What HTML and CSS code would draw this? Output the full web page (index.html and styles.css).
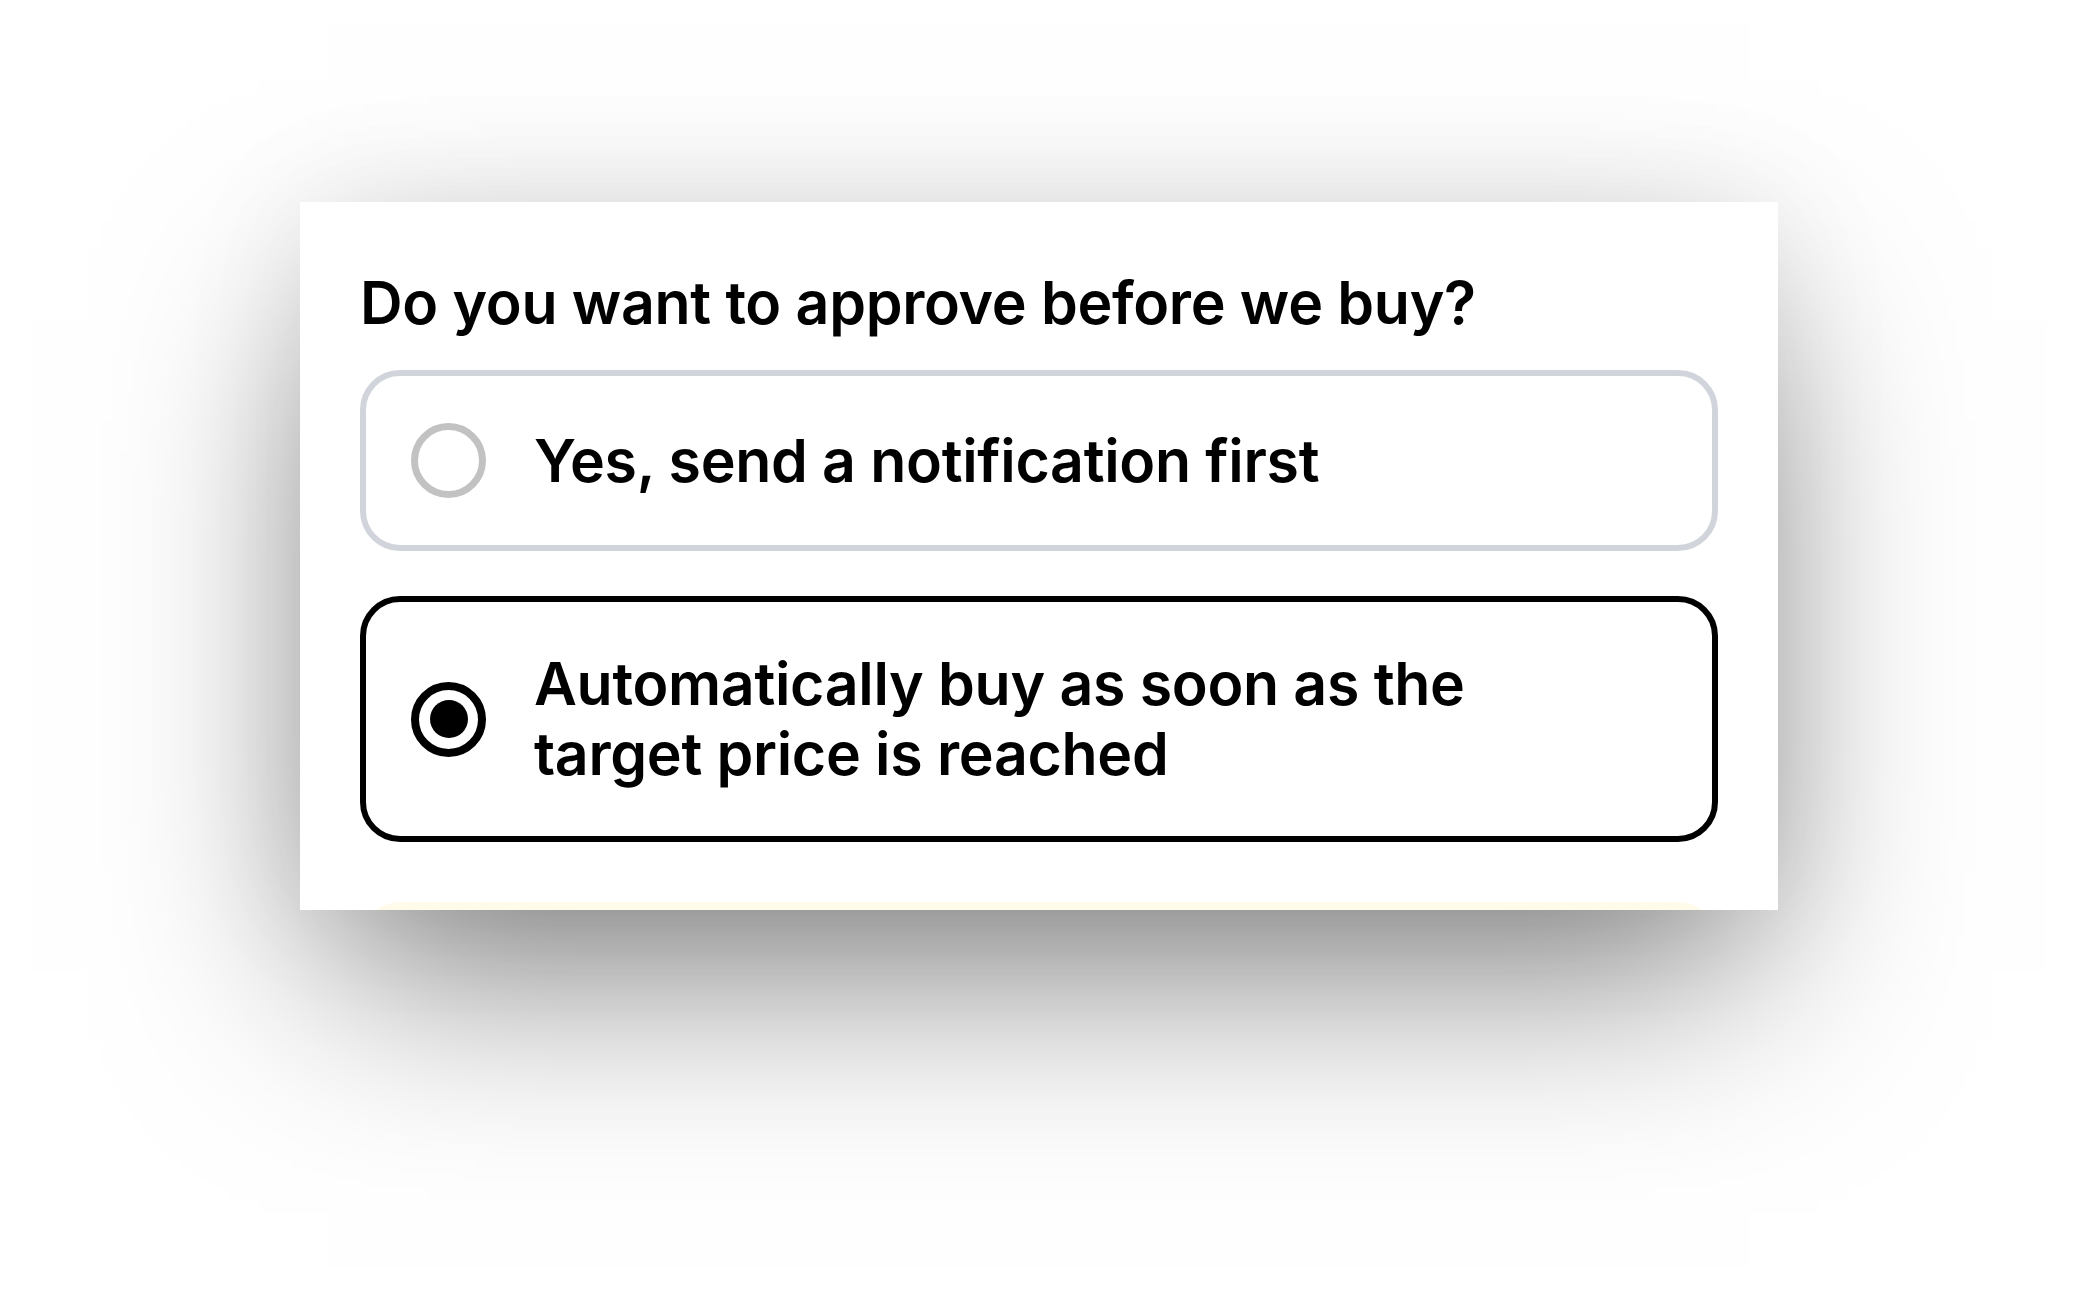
FILE: index.html
```
<!DOCTYPE html>
<html lang="en">
<head>
    <meta charset="UTF-8">
    <title>Purchase approval</title>
    <link rel="stylesheet" href="styles.css">
</head>
<body>

    <div class="stage">
        <div class="card">
            <h2 class="question">Do you want to approve before we buy?</h2>

            <div class="options">
                <!-- Option one: ask first -->
                <label class="option">
                    <span class="radio"></span>
                    <span class="option-text">Yes, send a notification first</span>
                </label>

                <!-- Option two: selected -->
                <label class="option selected">
                    <span class="radio"><span class="radio-dot"></span></span>
                    <span class="option-text">Automatically buy as soon as the target price is reached</span>
                </label>
            </div>

            <!-- Notice box, cut off by the card -->
            <div class="notice"></div>
        </div>
    </div>

</body>
</html>
```

FILE: styles.css
```
/* Page */
body {
    margin: 0;
    background: #ffffff;
    font-family: Inter, "Noto Sans", "Liberation Sans", sans-serif;
    color: #000000;
}

.stage {
    box-sizing: border-box;
    min-height: 100vh;
    padding: 202px 0 0 300px;
    overflow: hidden;
}

/* White card with the large soft shadow */
.card {
    width: 1358px;
    height: 708px;
    padding: 0 60px;
    background: #ffffff;
    overflow: hidden;
    box-shadow: 0 90px 200px -30px rgba(0, 0, 0, 0.5), 0 0 120px rgba(0, 0, 0, 0.08);
}

.question {
    margin: 0 0 32px;
    padding-top: 66px;
    font-size: 59px;
    line-height: 70px;
    font-weight: 600;
    letter-spacing: -0.3px;
}

.options {
    display: flex;
    flex-direction: column;
    gap: 45px;
}

.option {
    display: flex;
    align-items: center;
    gap: 48px;
    padding: 47px 45px;
    border: 6px solid #d1d5db;
    border-radius: 40px;
}

.option.selected {
    border-color: #000000;
}

.option-text {
    max-width: 1000px;
    font-size: 59px;
    line-height: 70px;
    font-weight: 600;
    letter-spacing: -0.3px;
}

/* Radio circles */
.radio {
    flex: none;
    width: 61px;
    height: 61px;
    border: 7px solid #c2c2c2;
    border-radius: 50%;
    display: flex;
    align-items: center;
    justify-content: center;
}

.option.selected .radio {
    width: 59px;
    height: 59px;
    border: 8px solid #000000;
}

.radio-dot {
    width: 38px;
    height: 38px;
    border-radius: 50%;
    background: #000000;
}

.notice {
    margin-top: 60px;
    height: 200px;
    background: #fffbeb;
    border-radius: 40px;
}
```
